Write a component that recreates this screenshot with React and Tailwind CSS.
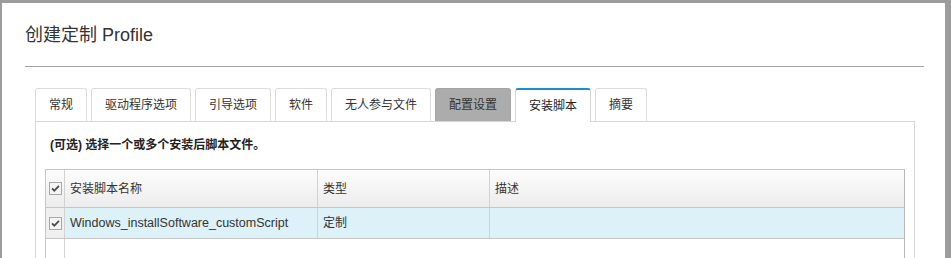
import React from "react";

const tabs = [
  { label: "常规" },
  { label: "驱动程序选项" },
  { label: "引导选项" },
  { label: "软件" },
  { label: "无人参与文件" },
  { label: "配置设置", state: "disabled" },
  { label: "安装脚本", state: "active" },
  { label: "摘要" },
];

function CheckBox() {
  return (
    <svg width="13" height="13" viewBox="0 0 13 13" className="block">
      <rect x="0.5" y="0.5" width="12" height="12" fill="#f4f4f4" stroke="#a8a8a8" />
      <path d="M3 6.3 L5.3 8.7 L10 3.8" fill="none" stroke="#4a4a4a" strokeWidth="1.7" />
    </svg>
  );
}

function Tab({ label, state }) {
  if (state === "active") {
    return (
      <div className="relative z-10 -mb-px flex h-[34px] items-center border-x border-t-2 border-x-[#d6d6d6] border-t-[#1b8fce] bg-white px-[13px] text-[#222] rounded-t-[3px]">
        {label}
      </div>
    );
  }
  if (state === "disabled") {
    return (
      <div className="flex h-[33px] items-center border border-b-0 border-[#a5a5a5] bg-[#acacac] px-[13px] text-[#333] rounded-t-[3px]">
        {label}
      </div>
    );
  }
  return (
    <div className="flex h-[33px] items-center border border-b-0 border-[#dcdcdc] bg-white px-[13px] text-[#333] rounded-t-[3px]">
      {label}
    </div>
  );
}

export default function App() {
  return (
    <div
      className="w-[951px] h-[258px] overflow-hidden bg-[#9c9c9c] pl-[2px] pt-[3px] pr-[6px]"
      style={{ fontFamily: '"Liberation Sans", "Noto Sans CJK SC", sans-serif' }}
    >
      <div className="h-full bg-white pl-[23px] pr-[21px]">
        {/* title */}
        <div className="border-b border-[#a3a3a3] pt-[20px] pb-[19px]">
          <h1 className="text-[18px] leading-[24px] text-[#333]">创建定制 Profile</h1>
        </div>

        <div className="ml-[10px] mr-[9px] mt-[21px]">
          {/* tabs */}
          <div className="flex items-end gap-[4px] text-[12px]">
            {tabs.map((t) => (
              <Tab key={t.label} {...t} />
            ))}
          </div>

          {/* panel */}
          <div className="h-[200px] border border-[#d6d6d6] px-[9px] pt-[15px]">
            <p className="pl-[5px] text-[12px] font-bold leading-[16px] text-[#222]">
              (可选) 选择一个或多个安装后脚本文件。
            </p>

            <div className="mt-[16px] border border-[#c6c6c6] border-r-[#b8b8b8] text-[12px] text-[#333]">
              <div className="grid grid-cols-[19px_253px_172px_1fr] h-[38px] border-b border-[#c6c6c6] bg-gradient-to-b from-[#fdfdfd] to-[#ececec]">
                <div className="flex items-center justify-center border-r border-[#d2d2d2]">
                  <CheckBox />
                </div>
                <div className="flex items-center border-r border-[#d2d2d2] pl-[5px]">安装脚本名称</div>
                <div className="flex items-center border-r border-[#d2d2d2] pl-[5px]">类型</div>
                <div className="flex items-center pl-[5px]">描述</div>
              </div>
              <div className="grid grid-cols-[19px_253px_172px_1fr] h-[31px] border-b border-[#c6c6c6] bg-[#ddf1f8]">
                <div className="flex items-center justify-center border-r border-[#d2d2d2] bg-[#efefef]">
                  <CheckBox />
                </div>
                <div className="flex items-center border-r border-[#d2d2d2] pl-[5px] text-[12.5px]">
                  Windows_installSoftware_customScript
                </div>
                <div className="flex items-center border-r border-[#d2d2d2] pl-[5px]">定制</div>
                <div />
              </div>
              <div className="grid grid-cols-[19px_1fr] h-[60px]">
                <div className="border-r border-[#d2d2d2]" />
                <div />
              </div>
            </div>
          </div>
        </div>
      </div>
    </div>
  );
}
